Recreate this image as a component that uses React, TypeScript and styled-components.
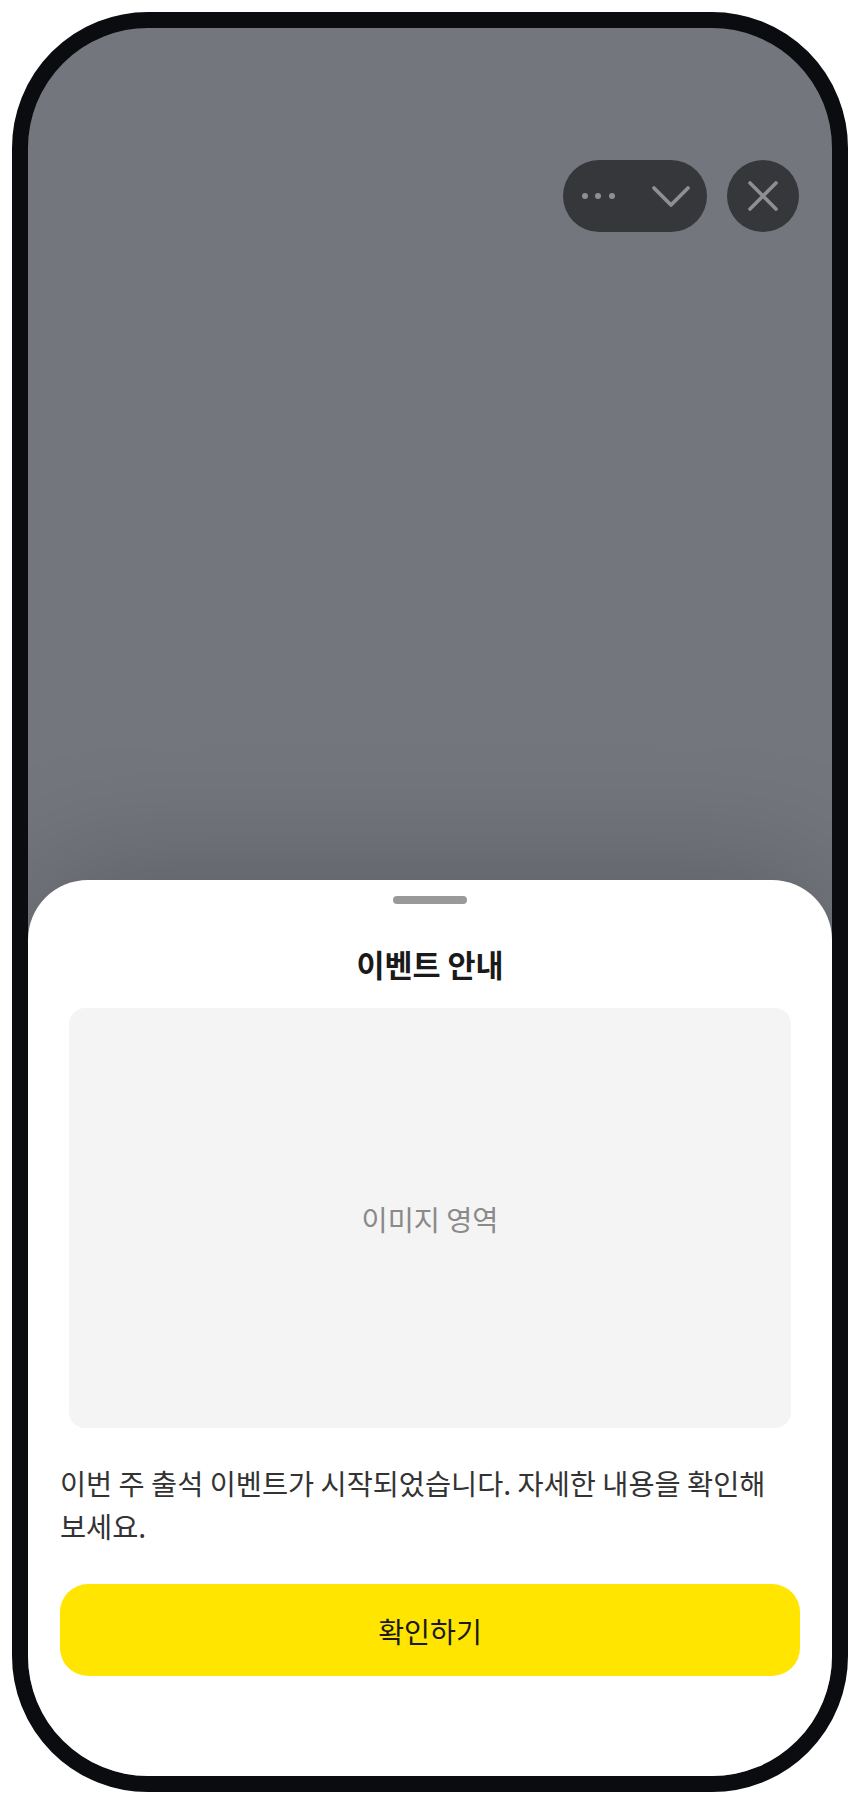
import React from 'react';
import styled, {createGlobalStyle} from 'styled-components';

const GlobalStyle = createGlobalStyle`
  * {
    box-sizing: border-box;
  }

  body {
    margin: 0;
    padding: 12px;
    background: #ffffff;
    font-family: "Noto Sans CJK KR", "Noto Sans", sans-serif;
  }
`;

const Phone = styled.div`
  width: 836px;
  height: 1780px;
  border: 16px solid #0b0c0f;
  border-radius: 136px;
  overflow: hidden;
  background: #73767d;
  display: flex;
  flex-direction: column;
`;

const TopBar = styled.div`
  display: flex;
  justify-content: flex-end;
  align-items: center;
  gap: 20px;
  padding: 132px 33px 0 0;
`;

const Capsule = styled.div`
  width: 144px;
  height: 72px;
  border-radius: 36px;
  background: #36373a;
  display: flex;
  align-items: center;
  justify-content: space-between;
  padding: 0 16px 0 19px;
`;

const RoundButton = styled.div`
  width: 72px;
  height: 72px;
  border-radius: 50%;
  background: #36373a;
  display: flex;
  align-items: center;
  justify-content: center;
`;

const Sheet = styled.div`
  margin-top: auto;
  background: #ffffff;
  border-radius: 60px 60px 0 0;
  box-shadow: 0 -10px 130px rgba(0, 0, 0, 0.2);
  display: flex;
  flex-direction: column;
  align-items: stretch;
  padding: 16px 32px 100px;
`;

const Handle = styled.div`
  align-self: center;
  width: 74px;
  height: 8px;
  border-radius: 4px;
  background: #999999;
`;

const Title = styled.h2`
  margin: 40px 0 0;
  font-size: 30.5px;
  line-height: 40px;
  font-weight: 700;
  color: #1a1a1a;
  text-align: center;
`;

const ImageArea = styled.div`
  margin: 24px 9px 0;
  height: 420px;
  border-radius: 16px;
  background: #f4f4f4;
  display: flex;
  align-items: center;
  justify-content: center;
  font-size: 28.4px;
  color: #8a8a8a;
`;

const Message = styled.p`
  margin: 33px 0 0;
  font-size: 28.4px;
  line-height: 43px;
  color: #333333;
  word-break: keep-all;
`;

const ConfirmButton = styled.button`
  margin-top: 37px;
  height: 92px;
  border: none;
  border-radius: 28px;
  background: #ffe500;
  font-family: inherit;
  font-size: 28.2px;
  color: #1a1a1a;
  cursor: pointer;
`;

const iconStroke = '#8e8f92';

export default function App() {
    return (
        <>
            <GlobalStyle/>
            <Phone>
                <TopBar>
                    <Capsule>
                        <svg width="33" height="8" viewBox="0 0 33 8">
                            <circle cx="3" cy="4" r="3" fill={iconStroke}/>
                            <circle cx="16" cy="4" r="3" fill={iconStroke}/>
                            <circle cx="30" cy="4" r="3" fill={iconStroke}/>
                        </svg>
                        <svg width="40" height="24" viewBox="0 0 40 24">
                            <path d="M3 4 L20 21 L37 4" fill="none" stroke={iconStroke} strokeWidth="3.8"
                                  strokeLinecap="round" strokeLinejoin="round"/>
                        </svg>
                    </Capsule>
                    <RoundButton>
                        <svg width="32" height="32" viewBox="0 0 32 32">
                            <path d="M3 3 L29 29 M29 3 L3 29" fill="none" stroke={iconStroke} strokeWidth="3.6"
                                  strokeLinecap="round"/>
                        </svg>
                    </RoundButton>
                </TopBar>
                <Sheet>
                    <Handle/>
                    <Title>이벤트 안내</Title>
                    <ImageArea>이미지 영역</ImageArea>
                    <Message>이번 주 출석 이벤트가 시작되었습니다. 자세한 내용을 확인해 보세요.</Message>
                    <ConfirmButton>확인하기</ConfirmButton>
                </Sheet>
            </Phone>
        </>
    );
}
